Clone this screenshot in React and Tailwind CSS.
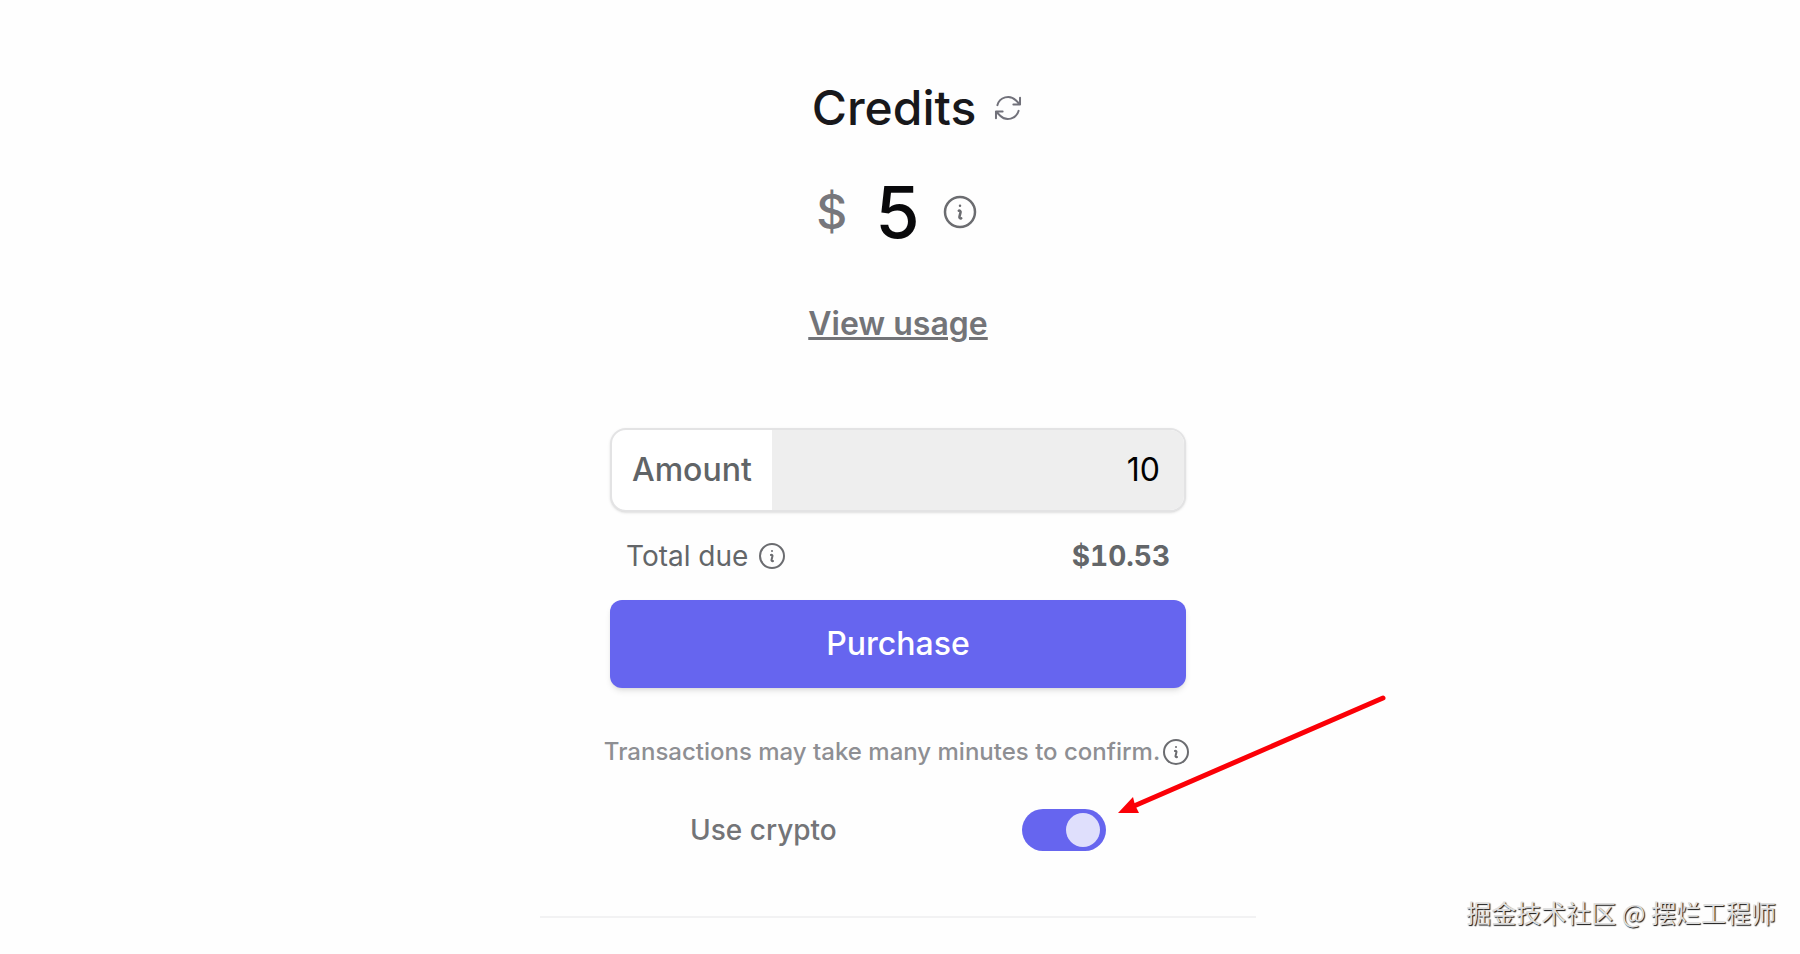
import React, { useState } from "react";
import { HiOutlineArrowPath, HiOutlineInformationCircle } from "react-icons/hi2";

const InfoButton = ({ label, className }) => (
  <button type="button" aria-label={label} className="shrink-0 text-[#6b6c70]">
    <HiOutlineInformationCircle className={className} />
  </button>
);

const CreditBalance = () => (
  <section className="flex flex-col items-center">
    <div className="flex items-center gap-4 pl-10">
      <h1 className="text-5xl font-medium text-[#18181b]">Credits</h1>
      <button
        type="button"
        aria-label="Refresh credits"
        className="text-[#71717a]"
      >
        <HiOutlineArrowPath className="size-8" />
      </button>
    </div>
    <div className="mt-5 flex h-30 items-center">
      <span className="text-5xl font-medium text-[#77777c]">$</span>
      <span className="ml-7 text-7xl font-medium text-[#09090b]">5</span>
      <span className="ml-5 flex">
        <InfoButton label="About your balance" className="size-10" />
      </span>
    </div>
    <a
      href="#usage"
      className="mt-7 text-[32px] leading-12 font-semibold text-[#737478] underline"
    >
      View usage
    </a>
  </section>
);

const PurchaseForm = () => {
  const [amount, setAmount] = useState("10");
  const [useCrypto, setUseCrypto] = useState(true);

  return (
    <form
      onSubmit={(e) => e.preventDefault()}
      className="mt-20 flex flex-col items-center"
    >
      <div className="flex h-21 w-full max-w-[576px] overflow-hidden rounded-2xl border-2 border-[#e3e3e4] bg-white shadow-sm">
        <label
          htmlFor="amount"
          className="flex items-center px-5 text-[32px] font-medium text-[#606467]"
        >
          Amount
        </label>
        <input
          id="amount"
          type="text"
          inputMode="numeric"
          value={amount}
          onChange={(e) => setAmount(e.target.value)}
          className="min-w-0 flex-1 bg-[#eeeeee] px-6 text-right text-[32px] text-black outline-none"
        />
      </div>
      <div className="mt-6 flex h-10 w-full max-w-[576px] items-center justify-between px-4 text-[28px] text-[#636669]">
        <span className="flex items-center gap-2">
          Total due
          <InfoButton label="About the total" className="size-8" />
        </span>
        <span className="font-bold tabular-nums">$10.53</span>
      </div>
      <button
        type="submit"
        className="mt-6 h-22 w-full max-w-[576px] rounded-xl bg-[#6665ef] text-[32px] font-medium text-white shadow-md"
      >
        Purchase
      </button>
      <p className="mt-12 flex h-8 items-center text-2xl font-medium text-[#8e8f93]">
        Transactions may take many minutes to confirm.
        <InfoButton label="About transaction times" className="size-8" />
      </p>
      <div className="mt-5 flex h-21 w-full max-w-[416px] items-center justify-between">
        <label
          htmlFor="use-crypto"
          className="text-[28px] font-medium text-[#737477]"
        >
          Use crypto
        </label>
        <span className="relative flex">
          <input
            id="use-crypto"
            type="checkbox"
            role="switch"
            checked={useCrypto}
            onChange={(e) => setUseCrypto(e.target.checked)}
            className="peer h-[42px] w-21 appearance-none rounded-full bg-zinc-300 checked:bg-[#6665ef]"
          />
          <span className="pointer-events-none absolute top-1 left-1 size-[34px] rounded-full bg-[#dfdffc] peer-checked:left-11" />
          <svg
            aria-hidden="true"
            viewBox="0 0 270 122"
            fill="none"
            className="pointer-events-none absolute bottom-9 left-24 h-[122px] w-[270px]"
          >
            <path
              d="M265 5 16 113"
              stroke="#fb0007"
              strokeWidth="5"
              strokeLinecap="round"
            />
            <path d="M0 120 15 104 17 112 21 120Z" fill="#fb0007" />
          </svg>
        </span>
      </div>
    </form>
  );
};

const App = () => {
  return (
    <div className="relative min-h-screen bg-[#fefefe] pr-1 font-['Inter',sans-serif]">
      <main className="mx-auto flex max-w-[716px] flex-col pt-21">
        <CreditBalance />
        <PurchaseForm />
        <hr className="mt-11 border-t-2 border-[#f2f2f3]" />
      </main>
      <p className="absolute right-6 bottom-6 font-['Noto_Sans_CJK_SC',sans-serif] text-[25px] leading-9 text-[#dedede] [text-shadow:1px_1px_1px_#111]">
        掘金技术社区 @ 摆烂工程师
      </p>
    </div>
  );
};

export default App;
